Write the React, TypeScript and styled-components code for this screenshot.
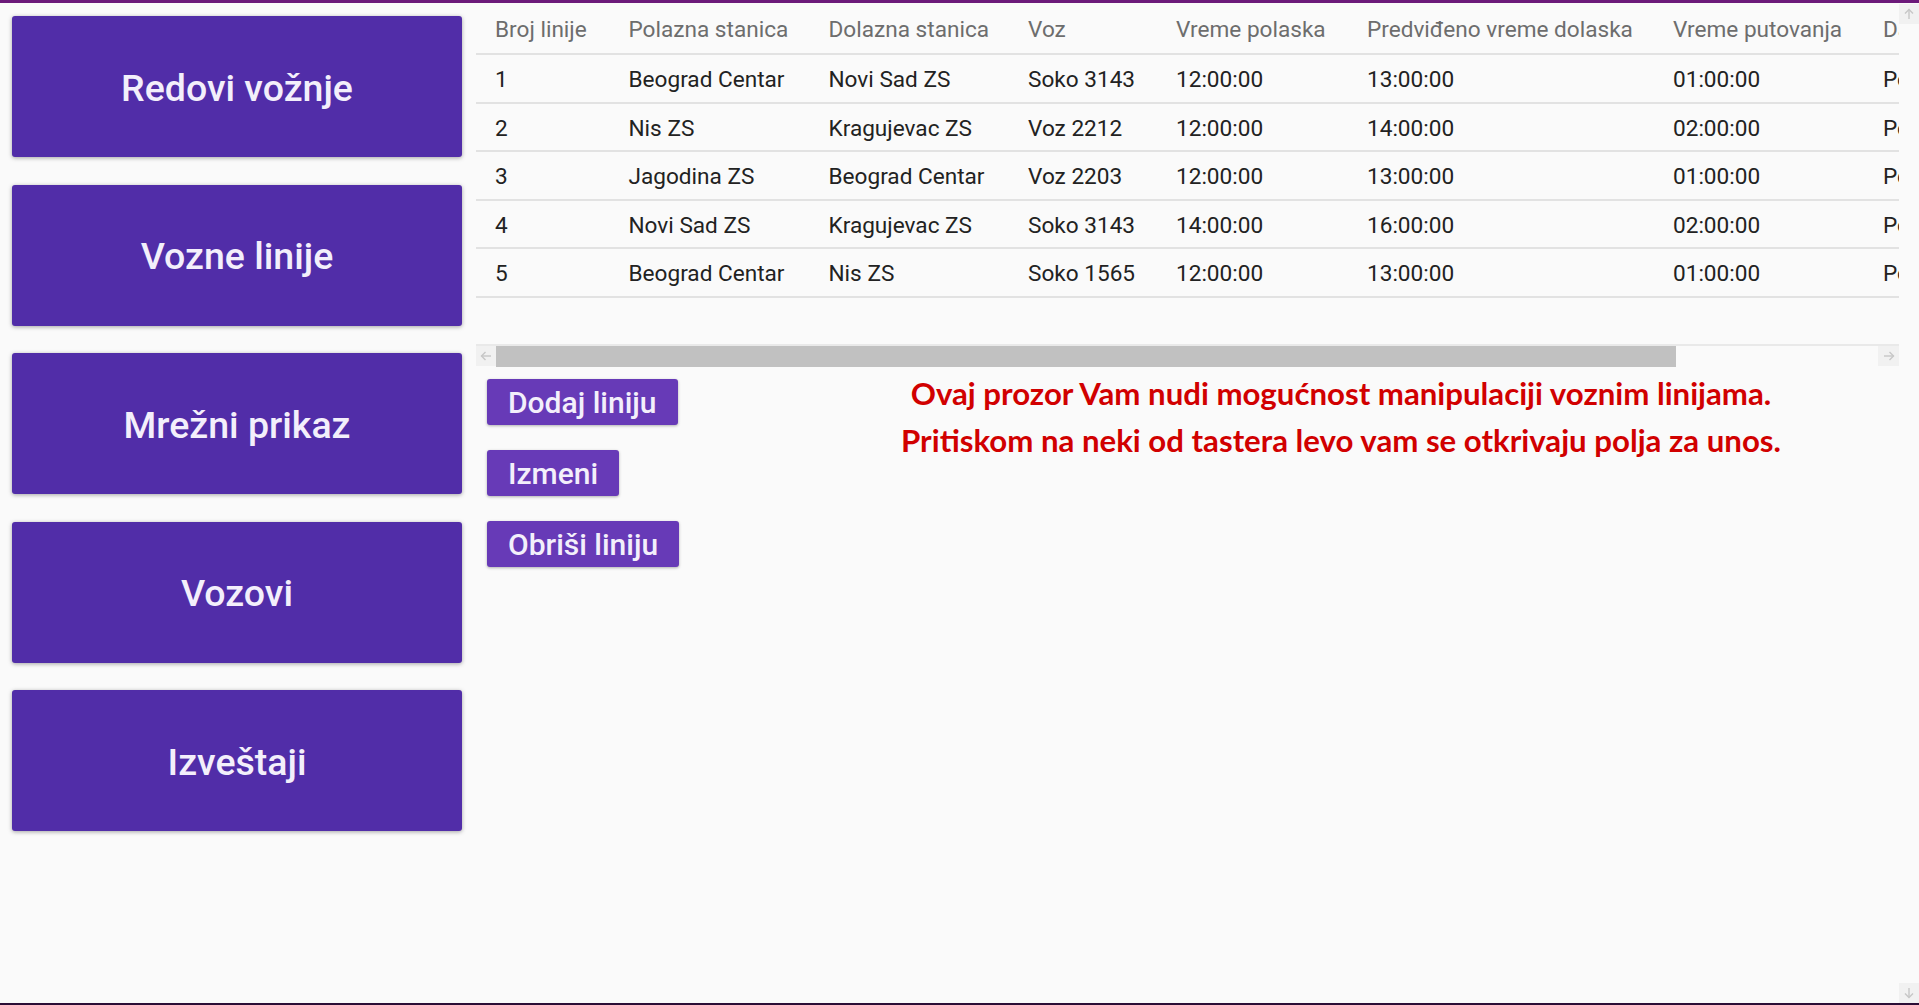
import React from 'react';
import styled, { createGlobalStyle } from 'styled-components';

// Types
type Linija = {
  broj: number;
  polazna: string;
  dolazna: string;
  voz: string;
  polazak: string;
  dolazak: string;
  putovanje: string;
  dani: string;
};

const GlobalStyle = createGlobalStyle`
  html, body {
    margin: 0;
    padding: 0;
    height: 100%;
    overflow: hidden;
    background: #fafafa;
  }
  #root {
    height: 100%;
  }
`;

const columns = [
  { title: 'Broj linije', width: 133.5 },
  { title: 'Polazna stanica', width: 200 },
  { title: 'Dolazna stanica', width: 199.5 },
  { title: 'Voz', width: 148 },
  { title: 'Vreme polaska', width: 191 },
  { title: 'Predviđeno vreme dolaska', width: 306 },
  { title: 'Vreme putovanja', width: 210 },
  { title: 'Dani saobraćanja', width: 278 },
];

const TABLE_WIDTH = columns.reduce((sum, c) => sum + c.width, 0);
const VIEW_WIDTH = 1423;

const linije: Linija[] = [
  { broj: 1, polazna: 'Beograd Centar', dolazna: 'Novi Sad ZS', voz: 'Soko 3143', polazak: '12:00:00', dolazak: '13:00:00', putovanje: '01:00:00', dani: 'Ponedeljak, Sreda, Petak' },
  { broj: 2, polazna: 'Nis ZS', dolazna: 'Kragujevac ZS', voz: 'Voz 2212', polazak: '12:00:00', dolazak: '14:00:00', putovanje: '02:00:00', dani: 'Ponedeljak, Utorak' },
  { broj: 3, polazna: 'Jagodina ZS', dolazna: 'Beograd Centar', voz: 'Voz 2203', polazak: '12:00:00', dolazak: '13:00:00', putovanje: '01:00:00', dani: 'Petak, Subota, Nedelja' },
  { broj: 4, polazna: 'Novi Sad ZS', dolazna: 'Kragujevac ZS', voz: 'Soko 3143', polazak: '14:00:00', dolazak: '16:00:00', putovanje: '02:00:00', dani: 'Ponedeljak, Četvrtak' },
  { broj: 5, polazna: 'Beograd Centar', dolazna: 'Nis ZS', voz: 'Soko 1565', polazak: '12:00:00', dolazak: '13:00:00', putovanje: '01:00:00', dani: 'Ponedeljak, Sreda' },
];

const navItems = ['Redovi vožnje', 'Vozne linije', 'Mrežni prikaz', 'Vozovi', 'Izveštaji'];
const actions = ['Dodaj liniju', 'Izmeni', 'Obriši liniju'];

const Arrow = ({ dir }: { dir: 'left' | 'right' | 'up' | 'down' }) => {
  const rotate = { left: 0, up: 90, right: 180, down: 270 }[dir];
  return (
    <svg width="20" height="20" viewBox="0 0 20 20">
      <g transform={`rotate(${rotate} 10 10)`} fill="none" stroke="#c6c6c6" strokeWidth="1.4">
        <path d="M15 10H5.5" />
        <path d="M9.5 6L5.5 10L9.5 14" />
      </g>
    </svg>
  );
};

export default function App() {
  return (
    <>
      <GlobalStyle />
      <Window>
        <Main>
          <Sidebar>
            {navItems.map((item) => (
              <NavButton key={item}>{item}</NavButton>
            ))}
          </Sidebar>

          <Content>
            <TableViewport>
              <Table>
                <thead>
                  <tr>
                    {columns.map((c) => (
                      <HeadCell key={c.title} $w={c.width}>
                        {c.title}
                      </HeadCell>
                    ))}
                  </tr>
                </thead>
                <tbody>
                  {linije.map((l) => (
                    <tr key={l.broj}>
                      <Cell>{l.broj}</Cell>
                      <Cell>{l.polazna}</Cell>
                      <Cell>{l.dolazna}</Cell>
                      <Cell>{l.voz}</Cell>
                      <Cell>{l.polazak}</Cell>
                      <Cell>{l.dolazak}</Cell>
                      <Cell>{l.putovanje}</Cell>
                      <Cell>{l.dani}</Cell>
                    </tr>
                  ))}
                </tbody>
              </Table>
            </TableViewport>

            <HScrollbar>
              <ScrollButton $w={20}>
                <Arrow dir="left" />
              </ScrollButton>
              <Track>
                <Thumb style={{ width: `${(VIEW_WIDTH / TABLE_WIDTH) * 100}%` }} />
              </Track>
              <ScrollButton $w={21}>
                <Arrow dir="right" />
              </ScrollButton>
            </HScrollbar>

            <ActionsRow>
              <ActionColumn>
                {actions.map((a) => (
                  <ActionButton key={a}>{a}</ActionButton>
                ))}
              </ActionColumn>
              <Message>
                <p>Ovaj prozor Vam nudi mogućnost manipulaciji voznim linijama.</p>
                <p>Pritiskom na neki od tastera levo vam se otkrivaju polja za unos.</p>
              </Message>
            </ActionsRow>
          </Content>
        </Main>

        <VScrollbar>
          <ScrollButton $w={20}>
            <Arrow dir="up" />
          </ScrollButton>
          <ScrollButton $w={20}>
            <Arrow dir="down" />
          </ScrollButton>
        </VScrollbar>
      </Window>
    </>
  );
}

const Window = styled.div`
  box-sizing: border-box;
  height: 1005px;
  display: flex;
  border-top: 3px solid #6c1a7a;
  border-bottom: 2px solid #2b0e36;
  background: #fafafa;
  font-family: Roboto, 'Liberation Sans', sans-serif;
  overflow: hidden;
`;

const Main = styled.div`
  flex: 1;
  min-width: 0;
  display: flex;
`;

const Sidebar = styled.nav`
  flex: 0 0 476px;
  box-sizing: border-box;
  padding: 13px 0 0 12px;
  display: flex;
  flex-direction: column;
  gap: 27.5px;
`;

const NavButton = styled.button`
  width: 450px;
  height: 141px;
  padding: 2px 0 0;
  border: none;
  border-radius: 3px;
  background: #512da8;
  color: #f3effb;
  font-family: Roboto, sans-serif;
  font-weight: 500;
  font-size: 37.5px;
  box-shadow: 0 1px 4px rgba(0, 0, 0, 0.35);
  cursor: pointer;
`;

const Content = styled.section`
  flex: 1;
  min-width: 0;
  display: flex;
  flex-direction: column;
`;

const TableViewport = styled.div`
  height: 341px;
  overflow: hidden;
`;

const Table = styled.table`
  border-collapse: separate;
  border-spacing: 0;
  table-layout: fixed;
  width: ${TABLE_WIDTH}px;
`;

const HeadCell = styled.th<{ $w: number }>`
  box-sizing: border-box;
  width: ${({ $w }) => $w}px;
  height: 52px;
  padding: 2px 0 0 19px;
  text-align: left;
  font-weight: 400;
  font-size: 22.6px;
  color: #6d6d6d;
  border-bottom: 2px solid #e2e2e2;
  white-space: nowrap;
  overflow: hidden;
`;

const Cell = styled.td`
  box-sizing: border-box;
  height: 48.5px;
  padding: 3px 0 0 19px;
  font-size: 22.6px;
  color: #222222;
  border-bottom: 2px solid #e2e2e2;
  white-space: nowrap;
  overflow: hidden;
`;

const HScrollbar = styled.div`
  display: flex;
  height: 21px;
  border-top: 2px solid #e9e9e9;
`;

const ScrollButton = styled.div<{ $w: number }>`
  flex: 0 0 ${({ $w }) => $w}px;
  height: 20px;
  display: flex;
  align-items: center;
  justify-content: center;
  background: #f1f1f1;
`;

const Track = styled.div`
  flex: 1;
  background: #fafafa;
`;

const Thumb = styled.div`
  height: 100%;
  background: #c1c1c1;
`;

const ActionsRow = styled.div`
  display: flex;
  padding: 12px 0 0 11px;
`;

const ActionColumn = styled.div`
  flex: 0 0 296px;
  display: flex;
  flex-direction: column;
  align-items: flex-start;
  gap: 25px;
`;

const ActionButton = styled.button`
  height: 46px;
  padding: 0 21px;
  border: none;
  border-radius: 3px;
  background: #673ab7;
  color: #f3effb;
  font-family: Roboto, sans-serif;
  font-weight: 500;
  font-size: 30px;
  box-shadow: 0 1px 3px rgba(0, 0, 0, 0.3);
  cursor: pointer;
`;

const Message = styled.div`
  flex: 1;
  margin-top: -9px;
  text-align: center;
  color: #d10000;
  font-family: Lato, 'Open Sans', sans-serif;
  font-weight: 700;
  font-size: 31.2px;
  line-height: 47px;

  p {
    margin: 0;
  }
`;

const VScrollbar = styled.div`
  flex: 0 0 20px;
  display: flex;
  flex-direction: column;
  justify-content: space-between;
  padding-top: 1px;
  background: #fafafa;
`;
